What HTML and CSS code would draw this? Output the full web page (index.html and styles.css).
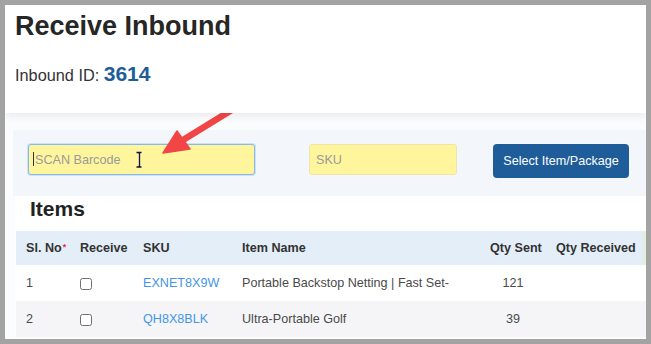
FILE: index.html
```html
<!DOCTYPE html>
<html lang="en">
<head>
    <meta charset="UTF-8">
    <meta name="viewport" content="width=device-width, initial-scale=1.0">
    <title>Receive Inbound</title>
    <link rel="stylesheet" href="styles.css">
</head>
<body>
    <div class="frame">
        <div class="page-header">
            <h1>Receive Inbound</h1>
            <div class="inbound-id">Inbound ID: <span class="inbound-num">3614</span></div>
        </div>

        <div class="content">
            <div class="scan-panel">
                <input type="text" class="scan-input focused" placeholder="SCAN Barcode">
                <input type="text" class="scan-input sku-input" placeholder="SKU">
                <button class="btn-select">Select Item/Package</button>
            </div>

            <div class="card">
                <h2>Items</h2>
                <table class="items-table">
                    <colgroup>
                        <col class="c-no">
                        <col class="c-recv">
                        <col class="c-sku">
                        <col class="c-name">
                        <col class="c-sent">
                        <col class="c-qrecv">
                        <col class="c-extra">
                    </colgroup>
                    <thead>
                        <tr>
                            <th>Sl. No<span class="req">*</span></th>
                            <th>Receive</th>
                            <th>SKU</th>
                            <th>Item Name</th>
                            <th class="center">Qty Sent</th>
                            <th>Qty Received</th>
                            <th class="extra"></th>
                        </tr>
                    </thead>
                    <tbody>
                        <tr>
                            <td>1</td>
                            <td><input type="checkbox" class="chk"></td>
                            <td><a href="#" class="sku-link">EXNET8X9W</a></td>
                            <td class="name">Portable Backstop Netting | Fast Set-</td>
                            <td class="center">121</td>
                            <td></td>
                            <td></td>
                        </tr>
                        <tr>
                            <td>2</td>
                            <td><input type="checkbox" class="chk"></td>
                            <td><a href="#" class="sku-link">QH8X8BLK</a></td>
                            <td class="name">Ultra-Portable Golf</td>
                            <td class="center">39</td>
                            <td></td>
                            <td></td>
                        </tr>
                    </tbody>
                </table>
            </div>
        </div>
    </div>

    <!-- annotation overlay: arrow, mouse cursor, text caret -->
    <svg class="overlay" width="651" height="344" viewBox="0 0 651 344">
        <line x1="235" y1="108" x2="183" y2="140" stroke="#f24646" stroke-width="6.5" stroke-linecap="round"/>
        <polygon points="163,153 177,131 190,149" fill="#f24646" stroke="#f24646" stroke-width="1.5" stroke-linejoin="round"/>
        <line x1="33.5" y1="152" x2="33.5" y2="166" stroke="#333" stroke-width="1"/>
        <path d="M136.5 152.5 h2 l0.5 0.5 l0.5 -0.5 h2 M139.5 153 v13.5 M136.5 167 h2 l0.5 -0.5 l0.5 0.5 h2" fill="none" stroke="#12124a" stroke-width="1.3"/>
    </svg>
</body>
</html>
```

FILE: styles.css
```css
html, body {
    margin: 0;
    padding: 0;
}
body {
    font-family: "Liberation Sans", Arial, sans-serif;
    color: #333;
    position: relative;
    width: 651px;
    height: 344px;
    overflow: hidden;
}
.frame {
    box-sizing: border-box;
    width: 651px;
    height: 344px;
    border: 5px solid #a3a3a3;
    background: #fbfcfd;
    overflow: hidden;
}
.page-header {
    position: relative;
    z-index: 1;
    height: 108px;
    box-sizing: border-box;
    padding: 5px 10px 0;
    background: #fff;
    box-shadow: 0 3px 9px rgba(0, 0, 0, 0.08);
}
h1 {
    margin: 0;
    font-size: 27px;
    line-height: 32px;
    font-weight: bold;
    color: #262626;
}
.inbound-id {
    margin-top: 18.5px;
    font-size: 16.3px;
    line-height: 26px;
    color: #333;
}
.inbound-num {
    font-size: 21px;
    font-weight: bold;
    color: #1f5d98;
}
.content {
    padding: 17px 0 0 8px;
}
.scan-panel {
    display: flex;
    align-items: flex-start;
    height: 66px;
    box-sizing: border-box;
    padding: 14px 0 0 15px;
    background: #f3f7fb;
}
.scan-input {
    box-sizing: border-box;
    height: 31px;
    padding: 0 6px;
    background: #fff59d;
    border: 1px solid #ede6a6;
    border-radius: 3px;
    font-family: inherit;
    font-size: 12.6px;
    color: #333;
    outline: none;
}
.scan-input::placeholder {
    color: #9a9a9a;
}
.scan-input.focused {
    width: 227px;
    border-color: #86b9ef;
    box-shadow: 0 0 0 1px rgba(134, 185, 239, 0.35);
}
.sku-input {
    width: 148px;
    margin-left: 54px;
}
.btn-select {
    box-sizing: border-box;
    width: 136px;
    height: 34px;
    margin-left: 36px;
    padding: 0;
    background: #1e5d99;
    color: #fff;
    border: none;
    border-radius: 4px;
    font-family: inherit;
    font-size: 12.6px;
}
.card {
    margin-left: 2px;
    background: #fff;
    padding-top: 1px;
}
h2 {
    margin: 0 0 10px;
    padding-left: 15px;
    font-size: 21px;
    line-height: 24px;
    font-weight: bold;
    color: #222;
}
.items-table {
    margin-left: 1px;
    width: 700px;
    table-layout: fixed;
    border-collapse: collapse;
    font-size: 12.6px;
}
.c-no { width: 54px; }
.c-recv { width: 63px; }
.c-sku { width: 99px; }
.c-name { width: 248px; }
.c-sent { width: 66px; }
.c-qrecv { width: 97px; }
.c-extra { width: 73px; }
.items-table th {
    height: 34px;
    padding: 0 10px;
    text-align: left;
    font-weight: bold;
    color: #333;
    background: #e3eef9;
    white-space: nowrap;
}
.items-table th.extra {
    background: #e3f0dd;
}
.items-table td {
    height: 36px;
    padding: 0 10px;
    color: #4a4a4a;
    white-space: nowrap;
    overflow: hidden;
}
.items-table tbody tr:nth-child(2) td {
    background: #f5f5f8;
}
.items-table .center {
    text-align: center;
}
.req {
    color: #e03030;
    font-size: 9px;
    vertical-align: 2px;
    margin-left: 1px;
}
.sku-link {
    color: #4495e6;
    text-decoration: none;
}
.chk {
    appearance: none;
    -webkit-appearance: none;
    box-sizing: border-box;
    width: 12px;
    height: 12px;
    margin: 0;
    border: 1px solid #707070;
    border-radius: 2.5px;
    background: #fff;
    vertical-align: middle;
}
.overlay {
    position: absolute;
    top: 0;
    left: 0;
    pointer-events: none;
}
```
